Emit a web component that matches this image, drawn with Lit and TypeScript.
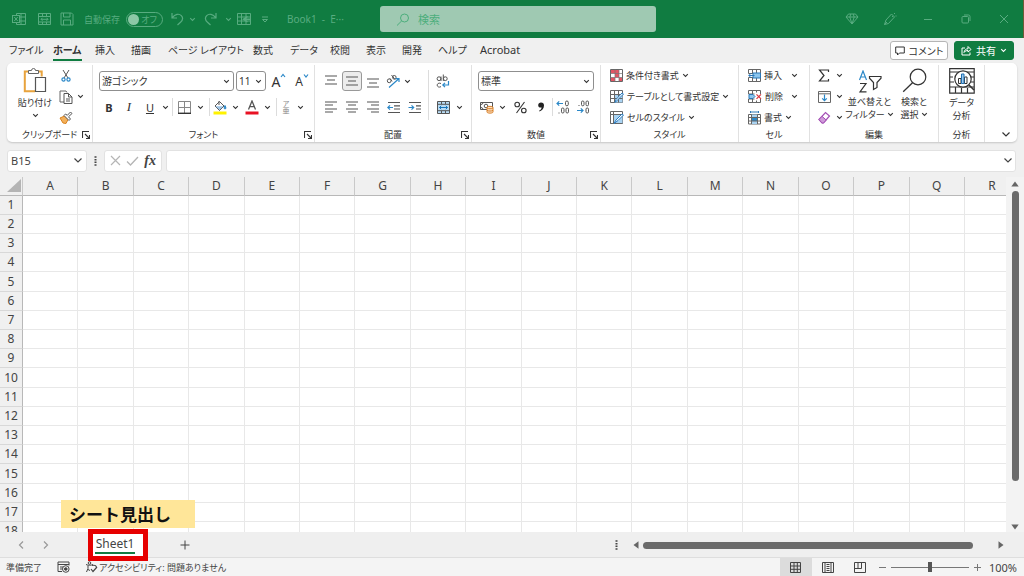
import { LitElement, html, svg, css, nothing } from "lit";
import { customElement } from "lit/decorators.js";

const ic = (w: number, h: number, body: unknown) => html`<svg
  width=${w} height=${h} viewBox="0 0 ${w} ${h}" fill="none" stroke="currentColor" stroke-width="1" aria-hidden="true">${body}</svg>`;

const chev = ic(7, 5, svg`<path d="M1.2 1.2 3.5 3.4 5.8 1.2" stroke-width="1.1"/>`);
const chevBig = ic(10, 7, svg`<path d="M1.5 1.5 5 5 8.5 1.5" stroke-width="1.2"/>`);
const launcher = ic(8, 8, svg`<path d="M.5 7V.5H7M3 3l4 4M7.5 4v3.500H4" stroke-width="1.1"/>`);
const lines = (rows: number[][]) => ic(14, 14, svg`<path d=${rows.map(([x, y, w]) => `M${x} ${y}h${w}`).join("")} stroke="#555" stroke-width="1.2"/>`);
const dots = ic(3, 10, svg`<path d="M.5 1h2M.5 3.700h2M.5 6.300h2M.5 9h2" stroke-width="1.4"/>`);

const I = {
  excel: ic(14, 14, svg`<path d="M4.500 3V1.500h9v11h-9V11M4.500 5h9M4.500 9h9M9 1.500v11"/><rect x=".5" y="3.500" width="7" height="7" fill="#107c41"/><path d="m2.300 5 3.400 4M5.700 5 2.300 9"/>`),
  board: ic(13, 14, svg`<path d="M.5 1.500h12v11H.5zM.5 4.500h12M4.500 1.500v3M8.500 1.500v3M.5 10h12M4.500 10v2.500M8.500 10v2.500M3 7.300h7M4.500 5.800 3 7.300l1.500 1.500M8.500 5.800 10 7.300 8.500 8.800"/>`),
  save: ic(14, 14, svg`<path d="M1 1h10.500L13 2.500V13H1zM3.500 1v4h6.500V1M3.500 13V8h7v5"/>`),
  undo: ic(15, 14, svg`<path d="M2 1v5h5M2.300 5.700C5 2 9 1.300 11.300 3.600c2.400 2.600 1 5-.8 6.700L7.500 13" stroke-width="1.2"/>`),
  redo: ic(15, 14, svg`<path d="M13 1v5H8M12.700 5.700C10 2 6 1.300 3.700 3.600c-2.400 2.600-1 5 .8 6.700L7.500 13" stroke-width="1.2"/>`),
  gridArrow: ic(14, 13, svg`<path d="M.5.5h13v11H.5zM.5 4h13M.5 8h13M4.500.5v11M9 .5v11"/><path d="M10.500 3.500 6.500 6.300l4 2.700M7 6.300h6" stroke-width="1.5"/>`),
  qat: ic(8, 7, svg`<path d="M1 1h6M1.500 3.500h5L4 6z"/>`),
  search: ic(14, 13, svg`<circle cx="8.500" cy="5" r="4"/><path d="M5.700 7.900 1 12.500"/>`),
  diamond: ic(14, 12, svg`<path d="M3.500 1h7L13 4 7 11 1 4zM1 4h12M4.800 4 7 11l2.200-7M4.800 4 5.800 1M9.200 4 8.200 1"/>`),
  pen: ic(14, 14, svg`<path d="M1.500 12.500 3 8l5.500-6 3 3-6 6.500zM1.500 12.500 4 10M9 4l1 1M11 2l1-1M12.500 4h1"/>`),
  min: ic(10, 10, svg`<path d="M1 5.500h8"/>`),
  restore: ic(10, 10, svg`<rect x="1" y="2.500" width="6.500" height="6.500" rx="1"/><path d="M3 1h4.500Q9 1 9 2.500V7"/>`),
  close: ic(10, 10, svg`<path d="m1 1 8 8M9 1 1 9"/>`),
  comment: ic(10, 10, svg`<path d="M.7 1h8.600v6H4.500L2.500 9V7H.7z"/>`),
  share: ic(11, 11, svg`<path d="M4 3H1v7h8V7.500M3 7.500C3.300 5 5 3.800 7 3.800V1.500L10 4.500 7 7V5.500C5.500 5.500 4 6 3 7.500z"/>`),
  paste: ic(24, 26, svg`<path d="M5.500 3.500H1.800v19.700H12M15 3.500h3.700v5" stroke="#e8a33d" stroke-width="2"/><path d="M5.500 5.500v-3h3a2 2 0 0 1 4 0h3v3z" fill="#fff" stroke="#666"/><path d="M12.500 9.500h10v14h-10z" fill="#fff" stroke="#555" stroke-width="1.200"/>`),
  cut: ic(10, 13, svg`<path d="m2 1 5 8M8 1 3 9" stroke="#555"/><circle cx="2.500" cy="10.500" r="1.600" stroke="#2b88c8" stroke-width="1.200"/><circle cx="7.500" cy="10.500" r="1.600" stroke="#2b88c8" stroke-width="1.200"/>`),
  copy: ic(14, 14, svg`<path d="M5 12H1V1h6l1 1.500" stroke="#666"/><path d="M5 3.500h4.500L13 7v6.500H5zM9.500 3.500V7H13M7 9h4M7 11h4" stroke="#555"/>`),
  brush: ic(14, 13, svg`<path d="m1 7 4.500-2L9 8.500 7 12.500 4 12z" fill="#f3b05a" stroke="#d98320"/><path d="m5 4.500 5 5 1.500-1.500-2-2.200L13 2.500 11.500 1 8.300 4.300 6.500 3z" fill="#fff" stroke="#555"/>`),
  borders: ic(13, 13, svg`<path d="M.5 12V.5h12V12M6.500 1v11M1 6.500h11" stroke="#888"/><path d="M0 12.300h13" stroke="#333" stroke-width="1.400"/>`),
  fill: ic(14, 15, svg`<path d="m2 6 4.500-4.500L11 6l-4.500 4.500z" stroke="#555" fill="#fff"/><path d="M2.500 6.200h8L6.500 10z" fill="#9cc3e6" stroke="none"/><path d="M6 1v4" stroke="#555"/><path d="M12 5.500c1.500 2.500.8 3.500 0 3.500s-1.300-1 0-3.500z" fill="#2b88c8" stroke="#2b88c8"/><path d="M.5 13h13" stroke="#fff200" stroke-width="3"/>`),
  color: ic(14, 15, svg`<path d="m3.500 9.500 3.500-8.500 3.500 8.500M4.700 6.700h4.600" stroke="#555" stroke-width="1.300"/><path d="M.5 13h13" stroke="#e81123" stroke-width="3"/>`),
  orient: ic(15, 15, svg`<circle cx="3.200" cy="6.800" r="1.900" stroke="#555"/><path d="m3.800 4.300 2.400 3M5.500 1l3.600 4.600" stroke="#555"/><circle cx="8.300" cy="3.300" r="1.800" stroke="#555"/><path d="M3 13.500 12.500 5M9.500 4.700h3.500V8" stroke="#2b88c8" stroke-width="1.200"/>`),
  indentL: ic(14, 13, svg`<path d="M1 1.500h12M7 4.800h6M7 8h6M1 11.500h12" stroke="#555" stroke-width="1.200"/><path d="M6 6.500H.8M3 4.300.8 6.500 3 8.700" stroke="#2b88c8" stroke-width="1.200"/>`),
  indentR: ic(14, 13, svg`<path d="M1 1.500h12M8 4.800h5M8 8h5M1 11.500h12" stroke="#555" stroke-width="1.200"/><path d="M.5 6.500h5.200M3.500 4.300l2.200 2.200-2.200 2.200" stroke="#2b88c8" stroke-width="1.200"/>`),
  wrap: ic(14, 14, svg`<circle cx="3" cy="4.700" r="1.900" stroke="#555"/><path d="M5 2.500V7M7.300.5V7" stroke="#555"/><circle cx="9.300" cy="4.700" r="1.900" stroke="#555"/><path d="M5 9.500c-2.500-1-3.800.3-3.800 1.700s1.500 2.500 3.800 1.500" stroke="#555"/><path d="M12.500 7v4H7M9 8.800 6.800 11 9 13.200" stroke="#2b88c8" stroke-width="1.200"/>`),
  merge: ic(13, 13, svg`<path d="M.5.5h12v12H.5z" fill="#b9dcf5" stroke="#555"/><path d="M4.500.5V3M8.500.5V3M4.500 10v2.500M8.500 10v2.500M.5 3.300h12M.5 9.700h12" stroke="#555"/><path d="M2.500 6.500h8M4.200 4.800 2.500 6.500l1.700 1.700M8.800 4.800l1.700 1.700-1.700 1.700" stroke="#1673b8"/>`),
  currency: ic(14, 13, svg`<path d="M.5 1.500h12v7H.5zM3 1.500a2 2 0 0 1-2 2M3 8.500a2 2 0 0 0-2-2" stroke="#555"/><circle cx="6" cy="5" r="1.800" stroke="#555"/><path d="M7 6.500c0-1.500 6-1.500 6 0v4.500c0 1.500-6 1.500-6 0z" fill="#fbe0c4" stroke="#d9822b"/><path d="M7 7c1 1 5 1 6 0M7 9.300c1 1 5 1 6 0" stroke="#d9822b"/>`),
  percent: ic(13, 13, svg`<circle cx="3.200" cy="3.500" r="2.300" stroke-width="1.100"/><circle cx="9.800" cy="9.500" r="2.300" stroke-width="1.100"/><path d="M10.500 1 2.500 12" stroke-width="1.100"/>`),
  comma: ic(8, 10, svg`<path d="M4 .5c2 0 3 1.200 3 3 0 3-1.800 5-4.500 6l-.4-.8C3.500 8 4.500 7 4.600 5.500 2.500 6 1.200 4.800 1.200 3.200 1.200 1.500 2.500.5 4 .5z" fill="#222" stroke="none"/>`),
  decInc: ic(14, 14, svg`<path d="M7 3.500H1M3.200 1.300 1 3.500l2.200 2.200" stroke="#2b88c8" stroke-width="1.200"/><rect x="9.500" y="1" width="2.800" height="4.800" rx="1.400" stroke="#555"/><rect x="5.500" y="8" width="2.500" height="5" rx="1.200" stroke="#555"/><rect x="10" y="8" width="2.500" height="5" rx="1.200" stroke="#555"/><path d="M2.500 13h1" stroke="#555"/>`),
  decDec: ic(14, 14, svg`<path d="M1 10.500h6M4.800 8.300 7 10.500l-2.200 2.200" stroke="#2b88c8" stroke-width="1.200"/><rect x="5.500" y="1" width="2.500" height="4.800" rx="1.200" stroke="#555"/><rect x="10" y="1" width="2.500" height="4.800" rx="1.200" stroke="#555"/><rect x="10" y="8" width="2.500" height="5" rx="1.200" stroke="#555"/><path d="M2.500 5.500h1" stroke="#555"/>`),
  cond: ic(13, 13, svg`<path d="M.5.5h12v12H.5z" fill="#fff" stroke="#666"/><path d="M1 1h8v3.500H1zM1 8.500h4V12H1zM5 4.500h4v4H5zM9 8.500h3V12H9z" fill="#e25563" stroke="none"/><path d="M.5 4.500h12M.5 8.500h12M5 .5v12M9 .5v12" stroke="#777" stroke-width=".7"/>`),
  tableFmt: ic(14, 13, svg`<path d="M.5.5h12v12H.5z" fill="#fff" stroke="#666"/><path d="M4.500 4.500h8v8h-8z" fill="#a9d3f2" stroke="none"/><path d="M.5 4.500h12M.5 8.500h12M4.500.5v12M8.500 .5v12" stroke="#666"/><path d="M13.500 4 8 9.500 5 12.500 6 9.500 12 3z" fill="#fff" stroke="#2b7cc0"/>`),
  cellStyle: ic(14, 13, svg`<path d="M.5.5h12v12H.5z" fill="#fff" stroke="#666"/><path d="M3 3.500h9.500v9H3z" fill="#a9d3f2" stroke="none"/><path d="M.5 3.500h12M3.500.5v12M.5 12.500h12" stroke="#666"/><path d="M13.500 4 8 9.500 4 12.500 6 9 12 3z" fill="#fff" stroke="#2b7cc0"/>`),
  ins: ic(13, 13, svg`<path d="M.5.500h12v4H.5zM.5 8.500h12v4H.5zM4.500.5v4M8.500.5v4M4.500 8.500v4M8.500 8.500v4" stroke="#666"/><path d="M5 4h7.500v5H5z" fill="#8cc6ee" stroke="#2b78b8"/><path d="M6.500 6.500H.8M3 4.300.8 6.500 3 8.700" stroke="#2b78b8"/>`),
  del: ic(14, 13, svg`<path d="M.5.500h12v3.500M.5.500v3.500h6M.5 12.500h12V9M.5 12.500V9h6M4.500.5v3.500M8.500.5v2M4.500 9v3.500M8.500 10.500v2" stroke="#666"/><path d="M1 4.500h4L7 6.500 5 8.500H1z" fill="#8cc6ee" stroke="#2b78b8"/><path d="m8.500 4.300 4.500 4.500M13 4.300 8.500 8.800" stroke="#d9363e" stroke-width="1.200"/>`),
  fmt: ic(13, 14, svg`<path d="M2.500 1h8M2.500 0v2M10.500 0v2" stroke="#2b78b8"/><path d="M.5 3.500h12v9.500H.5z" fill="#fff" stroke="#666"/><path d="M3.500 3.500h6v9.500h-6z" fill="#a9d3f2" stroke="none"/><path d="M3.500 6.500h6v3.500h-6z" fill="#2b88c8" stroke="none"/><path d="M.5 6.500h12M.5 10h12M3.500 3.500V13M9.500 3.500V13" stroke="#666"/>`),
  sigma: ic(12, 13, svg`<path d="M10.500 3V1H1.500l4.500 5.500L1.500 12h9v-2" stroke-width="1.200"/>`),
  fillDown: ic(13, 12, svg`<path d="M.5.5h12v11H.5zM.5 2.800h12" stroke="#666"/><path d="M6.500 3.500v6M4.200 7.300l2.300 2.300 2.300-2.300" stroke="#2b88c8" stroke-width="1.200"/>`),
  eraser: ic(13, 13, svg`<path d="m1 8.500 6.500-7L11.500 5 5.500 12h-1.500z" fill="#fff" stroke="#a44fb5" stroke-width="1.200"/><path d="m1 8.500 3-3.200L8.200 9 5.500 12h-1.500z" fill="#cf9bd9" stroke="#a44fb5"/>`),
  sort: ic(24, 23, svg`<path d="m1.500 10 3.500-9 3.500 9M2.700 7h4.600" stroke="#2b88c8" stroke-width="1.200"/><path d="M2 13.500h6L2 21.800h6.500" stroke-width="1.200"/><path d="M11.500 6.500h11.500v1.700L19 12.500v5l-3.500 2v-7l-4-4.300z" stroke-width="1.200"/>`),
  find: ic(25, 25, svg`<circle cx="16" cy="9" r="7.800" stroke-width="1.200"/><path d="m10.500 14.800-9.300 9" stroke-width="1.300"/>`),
  analyze: ic(26, 26, svg`<path d="M.7.700h24.500v24.500H.7zM.7 4h24.500M1 19h24M1 14h4M6.500 19v6M12.500 20v5M18.500 20v5M1 9h3M22 9h3M22 14h3" stroke-width="1.200"/><circle cx="14" cy="11" r="8.200" fill="#fff" stroke-width="1.200"/><path d="m20 17 5 5" stroke-width="1.600"/><path d="M9.500 10.500h2.500v5H9.500zM15.500 9h2.500v6.500h-2.500z" fill="#fff"/><path d="M12.500 6h2.500v9.500h-2.500z" fill="#9cc9ee" stroke="#1f6fb2"/>`),
  x: ic(11, 11, svg`<path d="m1 1 9 9M10 1 1 10" stroke="#b5b5b5" stroke-width="1.200"/>`),
  check: ic(13, 10, svg`<path d="m1 5.500 3.500 3.500L12 1" stroke="#b5b5b5" stroke-width="1.300"/>`),
  prev: ic(6, 10, svg`<path d="M5 1.500 1.500 5 5 8.500" stroke="#999" stroke-width="1.200"/>`),
  next: ic(6, 10, svg`<path d="M1 1.500 4.500 5 1 8.500" stroke="#999" stroke-width="1.200"/>`),
  plus: ic(10, 10, svg`<path d="M5 .5v9M.5 5h9"/>`),
  macro: ic(13, 12, svg`<path d="M5 10.500H1V1h11v3.500M1 3.500h11M3 6h3M3 8h2"/><circle cx="8.800" cy="8" r="3.300"/><circle cx="8.800" cy="8" r="1.300" fill="currentColor"/>`),
  access: ic(13, 12, svg`<circle cx="4.500" cy="2" r="1.300"/><path d="M1 3.500c2 1 5 1 7 0M3 4.500v3L1.500 11M3.500 8l1 2"/><path d="m6 8 2 2.500L12 6M7 4.500c2-.5 4 0 4.500 1.500" stroke-width="1.200"/>`),
  vNormal: ic(11, 11, svg`<path d="M.5.5h10v10H.5zM.5 4h10M.5 7.300h10M4 .5v10M7.300.5v10"/>`),
  vPage: ic(12, 11, svg`<path d="M.5.5h11v10H.5zM3 .5v10M9 .5v10M4.500 2.500h3M4.500 4.500h3M4.500 6.500h3M4.500 8.500h3"/>`),
  vBreak: ic(12, 11, svg`<path d="M.5.5h11v10H.5zM.5 6.500h7M7.500.5v6M4 .5v6"/>`),
  up: ic(8, 6, svg`<path d="M4 .5 7.700 5.500H.3z" fill="#666" stroke="none"/>`),
  down: ic(8, 6, svg`<path d="M4 5.500 7.700.5H.3z" fill="#666" stroke="none"/>`),
  left: ic(6, 8, svg`<path d="M.5 4 5.500.3v7.400z" fill="#666" stroke="none"/>`),
  right: ic(6, 8, svg`<path d="M5.500 4 .5.3v7.400z" fill="#666" stroke="none"/>`),
};

const reset = css`
  :host, * { box-sizing: border-box; }
  svg { display: block; flex: none; }
  button, input, select {
    appearance: none; margin: 0; padding: 0; border: 0; background: none;
    font: inherit; color: inherit; font-feature-settings: inherit; outline: none; border-radius: 0; min-width: 0;
  }
  button { display: flex; align-items: center; justify-content: center; white-space: nowrap; }
`;

@customElement("title-bar")
class TitleBar extends LitElement {
  static styles = [reset, css`
    :host { display: grid; grid-template-columns: 380px minmax(0, 276px) 1fr; align-items: center; height: 38px;
      background: #107c41; color: #58ac80; border-right: 1px solid #6f5a35; font-size: 9px; }
    .left { display: grid; grid-template-columns: 26px 24px 22px 48px 40px 22px 8px 28px 8px 24px 18px 1fr; padding-left: 6px; align-items: center; }
    .auto { padding-left: 6px; }
    .switch { display: flex; align-items: center; justify-content: space-between; height: 15px; width: 37px; border: 1px solid; border-radius: 8px; padding: 0 5px 0 1px; }
    .knob { width: 11px; height: 11px; border-radius: 50%; background: #8cc8a6; }
    .book { font-size: 10px; padding-left: 13px; white-space: nowrap; }
    .search { display: flex; align-items: center; gap: 8px; height: 26px; padding-left: 16px; border-radius: 3px; background: #9fc9b2; color: #4cae7c; font-size: 11px; }
    .search input { flex: 1; }
    .search input::placeholder { color: inherit; opacity: 1; }
    .right { display: flex; justify-content: flex-end; }
    .right button { width: 38px; height: 24px; }
  `];
  render() {
    return html`
      <div class="left">
        <button aria-label="Excel">${I.excel}</button>
        <button aria-label="表示">${I.board}</button>
        <button aria-label="保存">${I.save}</button>
        <span class="auto">自動保存</span>
        <button class="switch" role="switch" aria-checked="false" aria-label="自動保存"><span class="knob"></span>オフ</button>
        <button aria-label="元に戻す">${I.undo}</button><button aria-label="元に戻す一覧">${chev}</button>
        <button aria-label="やり直し">${I.redo}</button><button aria-label="やり直し一覧">${chev}</button>
        <button aria-label="シート">${I.gridArrow}</button>
        <button aria-label="カスタマイズ">${I.qat}</button>
        <span class="book">Book1 &nbsp;-&nbsp; E···</span>
      </div>
      <label class="search">${I.search}<input type="text" placeholder="検索" aria-label="検索" /></label>
      <div class="right">
        <button aria-label="Premium">${I.diamond}</button>
        <button aria-label="ペン">${I.pen}</button>
        <button aria-label="最小化">${I.min}</button>
        <button aria-label="元のサイズ">${I.restore}</button>
        <button aria-label="閉じる">${I.close}</button>
      </div>`;
  }
}

const TABS = ["ファイル", "ホーム", "挿入", "描画", "ページ レイアウト", "数式", "データ", "校閲", "表示", "開発", "ヘルプ", "Acrobat"];

@customElement("tab-row")
class TabRow extends LitElement {
  static styles = [reset, css`
    :host { display: flex; justify-content: space-between; align-items: center; height: 25px; padding: 0 10px 0 9px; font-size: 10px; color: #333; }
    .tabs { display: grid; grid-template-columns: 44px 42px 36px 37px 85px 37px 40px 36px 36px 36px 42px 50px; }
    .tab { justify-content: flex-start; height: 22px; }
    .tab:last-child { font-size: 11px; }
    .tab span { line-height: 18px; border-bottom: 2px solid transparent; }
    .on span { font-weight: 700; border-color: #107c41; }
    .actions { display: flex; gap: 6px; }
    .actions button { height: 19px; gap: 4px; border-radius: 3px; border: 1px solid #b5b5b5; background: #fff; width: 58px; }
    .actions .share { background: #107c41; border-color: #107c41; color: #fff; width: 60px; }
  `];
  render() {
    return html`
      <div class="tabs" role="tablist">
        ${TABS.map((t) => html`<button role="tab" class="tab ${t === "ホーム" ? "on" : ""}"><span>${t}</span></button>`)}
      </div>
      <div class="actions">
        <button>${I.comment}コメント</button>
        <button class="share">${I.share}共有 ${chev}</button>
      </div>`;
  }
}

@customElement("ribbon-bar")
class RibbonBar extends LitElement {
  static styles = [reset, css`
    :host { display: grid; grid-template-columns: 86px 222px 157px 129px 138px 71px 129px 46px 1fr; height: 79px; margin: 0 7px;
      background: #fff; border-radius: 5px; box-shadow: 0 1px 2px #0000002e; padding: 2px 0; font-size: 9px; color: #333; }
    .group { display: grid; grid-template-columns: minmax(0, 1fr); grid-template-rows: minmax(0, 1fr) 14px; border-right: 1px solid #e1e1e1; min-width: 0; }
    .foot { display: grid; grid-template-columns: 12px 1fr 12px; align-items: center; text-align: center; line-height: 14px; white-space: nowrap; }
    .foot span { grid-column: 2; }
    .two { display: grid; grid-template-rows: 20px 20px; gap: 6px; padding: 6px 6px 0; align-content: start; }
    .row { display: grid; align-items: center; }
    .row > *, .stack > * { justify-self: center; }
    .sep { width: 1px; height: 18px; background: #dcdcdc; }
    .tall { width: 1px; height: 50px; background: #dcdcdc; margin: 5px 0 0 3px; }
    .stack { display: grid; grid-template-rows: repeat(3, 21px); align-items: center; }
    .stack.list > button { justify-self: start; gap: 3px; }
    .combo { display: grid; grid-template-columns: 1fr 10px; align-items: center; height: 20px; border: 1px solid #8f8f8f; border-radius: 3px; justify-self: stretch; font-size: 10px; }
    .combo select { grid-area: 1 / 1 / 2 / 3; height: 18px; padding-left: 2px; }
    .combo svg { grid-area: 1 / 2; pointer-events: none; }
    .font { grid-template-columns: 135px 30px 22px 20px; column-gap: 2px; }
    .fmt { grid-template-columns: 20px 20px 22px 9px 5px 18px 14px 4px 18px 12px 21px 10px 8px 12px 17px; }
    .b { font-weight: 700; font-size: 11px; }
    .i { font-style: italic; font-family: "Liberation Serif", serif; font-size: 13px; }
    .u { text-decoration: underline; font-size: 11px; }
    .ab { font-size: 14px; align-items: flex-start; line-height: 17px; }
    .ab.small { font-size: 12px; }
    .ab svg { color: #2b88c8; }
    .ruby { flex-direction: column; font-size: 7px; line-height: 7px; color: #888; }
    .align { display: grid; grid-template-columns: 105px 6px 1fr; padding-left: 5px; }
    .align .two { padding: 6px 0 0; }
    .five { grid-template-columns: repeat(5, 21px); }
    .row > .near { justify-self: start; }
    .mid { width: 20px; height: 20px; border: 1px solid #999; border-radius: 3px; background: #ececec; }
    .pair { grid-template-columns: 24px 8px; }
    .num { grid-template-columns: 18px 12px 24px 18px 4px 18px 22px; }
    .clip { display: grid; grid-template-columns: 46px 16px 12px; padding-left: 5px; }
    .big { flex-direction: column; justify-content: flex-start; line-height: 13px; padding-top: 3px; }
    .big > svg:first-child { margin-bottom: 2px; }
    .big > svg:last-child { margin-top: 4px; }
    .sort { padding-top: 5px; }
    .line { display: flex; align-items: center; gap: 2px; }
    .edit { display: grid; grid-template-columns: 22px 8px 53px 36px; padding-left: 3px; }
    .cells { grid-template-columns: 43px 9px; padding-left: 9px; }
    .cells .wide { grid-column: 1 / 3; }
    .styles { padding-left: 9px; }
    .end { display: flex; align-items: flex-end; justify-content: flex-end; padding: 0 6px 4px; }
  `];
  group(label: string, body: unknown, launch = false) {
    return html`<section class="group" aria-label=${label}>${body}
      <div class="foot"><span>${label}</span>${launch ? html`<button aria-label="${label}の設定">${launcher}</button>` : nothing}</div></section>`;
  }
  b(icon: unknown, label: string, cls = "") {
    return html`<button class=${cls} aria-label=${label}>${icon}</button>`;
  }
  render() {
    const c = this.b(chev, "オプション");
    const sep = html`<span class="sep"></span>`;
    const caret = (up: boolean) => ic(6, 5, svg`<path d=${up ? "M1 4l2-2.500L5 4" : "M1 1.500 3 4l2-2.500"} stroke-width="1.200"/>`);
    return html`
      ${this.group("クリップボード", html`<div class="clip">
        <button class="big">${I.paste}<span>貼り付け</span>${chev}</button>
        <div class="stack">${this.b(I.cut, "切り取り")}${this.b(I.copy, "コピー")}${this.b(I.brush, "書式のコピー")}</div>
        <div class="stack"><span></span>${c}</div>
      </div>`, true)}
      ${this.group("フォント", html`<div class="two">
        <div class="row font">
          <label class="combo"><select aria-label="フォント名"><option>游ゴシック</option></select>${chev}</label>
          <label class="combo"><select aria-label="フォント サイズ"><option>11</option></select>${chev}</label>
          <button class="ab" aria-label="フォント サイズの拡大">A${caret(true)}</button>
          <button class="ab small" aria-label="フォント サイズの縮小">A${caret(false)}</button>
        </div>
        <div class="row fmt">
          ${this.b("B", "太字", "b")}${this.b("I", "斜体", "i")}${this.b("U", "下線", "u")}${c}${sep}
          ${this.b(I.borders, "罫線")}${c}${sep}${this.b(I.fill, "塗りつぶしの色")}${c}${this.b(I.color, "フォントの色")}${c}${sep}
          <button class="ruby" aria-label="ふりがな"><span>ア</span><span>亜</span></button>${c}
        </div></div>`, true)}
      ${this.group("配置", html`<div class="align">
        <div class="two">
          <div class="row five">
            ${this.b(lines([[1, 2, 12], [3, 6, 8], [1, 10, 12]]), "上揃え")}
            ${this.b(lines([[1, 3, 12], [3, 7, 8], [1, 11, 12]]), "上下中央揃え", "mid")}
            ${this.b(lines([[1, 5, 12], [3, 9, 8], [1, 13, 12]]), "下揃え")}
            ${this.b(I.orient, "方向")}${this.b(chev, "方向の一覧", "near")}
          </div>
          <div class="row five">
            ${this.b(lines([[1, 2, 12], [1, 5, 8], [1, 9, 12], [1, 12, 8]]), "左揃え")}
            ${this.b(lines([[1, 2, 12], [3, 5, 8], [1, 9, 12], [3, 12, 8]]), "中央揃え")}
            ${this.b(lines([[1, 2, 12], [5, 5, 8], [1, 9, 12], [5, 12, 8]]), "右揃え")}
            ${this.b(I.indentL, "インデントを減らす")}${this.b(I.indentR, "インデントを増やす")}
          </div>
        </div>
        <span class="tall"></span>
        <div class="two">
          <div class="row pair">${this.b(I.wrap, "折り返して全体を表示する")}</div>
          <div class="row pair">${this.b(I.merge, "セルを結合して中央揃え")}${c}</div>
        </div></div>`, true)}
      ${this.group("数値", html`<div class="two">
        <label class="combo"><select aria-label="表示形式"><option>標準</option></select>${chev}</label>
        <div class="row num">${this.b(I.currency, "通貨表示形式")}${c}${this.b(I.percent, "パーセント スタイル")}${this.b(I.comma, "桁区切りスタイル")}${sep}
          ${this.b(I.decInc, "小数点以下の表示桁数を増やす")}${this.b(I.decDec, "小数点以下の表示桁数を減らす")}</div></div>`, true)}
      ${this.group("スタイル", html`<div class="stack list styles">
        <button>${I.cond}条件付き書式${chev}</button>
        <button>${I.tableFmt}テーブルとして書式設定${chev}</button>
        <button>${I.cellStyle}セルのスタイル${chev}</button></div>`)}
      ${this.group("セル", html`<div class="stack list cells">
        <button>${I.ins}挿入</button>${this.b(chev, "挿入の一覧")}
        <button>${I.del}削除</button>${this.b(chev, "削除の一覧")}
        <button class="wide">${I.fmt}書式 ${chev}</button></div>`)}
      ${this.group("編集", html`<div class="edit">
        <div class="stack">${this.b(I.sigma, "オート SUM")}${this.b(I.fillDown, "フィル")}${this.b(I.eraser, "クリア")}</div>
        <div class="stack">${c}${c}${c}</div>
        <button class="big sort">${I.sort}<span>並べ替えと</span><span class="line">フィルター${chev}</span></button>
        <button class="big">${I.find}<span>検索と</span><span class="line">選択${chev}</span></button></div>`)}
      ${this.group("分析", html`<button class="big">${I.analyze}<span>データ</span><span>分析</span></button>`)}
      <div class="end"><button aria-label="リボンの表示オプション">${chevBig}</button></div>`;
  }
}

@customElement("formula-bar")
class FormulaBar extends LitElement {
  static styles = [reset, css`
    :host { display: grid; grid-template-columns: 80px 17px 58px 1fr; padding: 7px 8px 5px 7px; height: 35px; align-items: center; color: #444; }
    .box { display: flex; align-items: center; height: 22px; background: #fff; border: 1px solid #e2e2e2; border-radius: 3px; }
    .name { padding: 0 3px; font-size: 11px; }
    .box input { flex: 1; width: 20px; }
    .dots { justify-self: center; }
    .fx { justify-content: space-evenly; }
    .f { font: italic 700 14px "Liberation Serif", serif; }
    .formula { margin-left: 4px; padding: 0 2px; }
  `];
  render() {
    return html`
      <div class="box name"><input type="text" aria-label="名前ボックス" .value=${"B15"} /><button aria-label="名前の一覧">${chevBig}</button></div>
      <span class="dots">${dots}</span>
      <div class="box fx"><button aria-label="キャンセル">${I.x}</button><button aria-label="入力">${I.check}</button><button class="f" aria-label="関数の挿入">fx</button></div>
      <div class="box formula"><input type="text" aria-label="数式バー" /><button aria-label="数式バーの展開">${chevBig}</button></div>`;
  }
}

const COLS = [..."ABCDEFGHIJKLMNOPQR"];
const ROWS = Array.from({ length: 18 }, (_, i) => i + 1);

@customElement("sheet-grid")
class SheetGrid extends LitElement {
  static styles = [reset, css`
    :host { display: grid; grid-template-columns: 1fr 18px; min-height: 0; overflow: hidden; }
    .view { overflow: hidden; background: #fff; }
    table { width: 100%; table-layout: fixed; border-collapse: separate; border-spacing: 0; font-size: 12px; color: #444; }
    .side { width: 23px; }
    .last { width: 41px; }
    tr { height: 19px; }
    tbody tr:nth-child(5n) { height: 20px; }
    th, td { padding: 0; font-weight: 400; line-height: 16px; border-right: 1px solid #e8e8e8; border-bottom: 1px solid #e8e8e8; }
    th { background: #f0f0f0; border-color: #c9c9c9; }
    thead th { border-bottom-color: #b8b8b8; }
    tbody th { border-right-color: #b8b8b8; border-bottom-color: #d8d8d8; }
    thead th:last-child { padding-left: 13px; }
    th:last-child, td:last-child { border-right: 0; }
    tbody th:first-child { border-right: 1px solid #b8b8b8; }
    .corner svg { margin: 0 0 0 auto; }
    .scroll { display: flex; flex-direction: column; align-items: center; gap: 4px; padding: 4px 0 2px; background: #f3f3f3; }
    .track { flex: 1; display: flex; }
    .thumb { width: 7px; height: 88%; border-radius: 4px; background: #6b6b6b; }
  `];
  render() {
    return html`
      <div class="view"><table aria-label="Sheet1">
        <colgroup><col class="side" />${COLS.map((c) => html`<col class=${c === "R" ? "last" : ""} />`)}</colgroup>
        <thead><tr><th class="corner">${ic(15, 14, svg`<path d="M14 0v13H0z" fill="#b4b4b4" stroke="none"/>`)}</th>${COLS.map((c) => html`<th scope="col">${c}</th>`)}</tr></thead>
        <tbody>${ROWS.map((r) => html`<tr><th scope="row">${r}</th>${COLS.map(() => html`<td></td>`)}</tr>`)}</tbody>
      </table></div>
      <div class="scroll">${I.up}<div class="track"><div class="thumb"></div></div>${I.down}</div>`;
  }
}

@customElement("sheet-tabs")
class SheetTabs extends LitElement {
  static styles = [reset, css`
    :host { display: grid; grid-template-columns: 612px 1fr; align-items: center; height: 26px; background: #efefef; border-bottom: 1px solid #dedede; color: #444; }
    .tabs { display: grid; grid-template-columns: 26px 24px 30px 60px 14px 46px; padding-left: 8px; align-items: center; }
    .tab { grid-column: 4; position: relative; height: 26px; background: #fff; font-size: 12px; }
    .tab button { width: 54px; height: 24px; }
    .tab button span { line-height: 17px; border-bottom: 2px solid #107c41; padding: 0 1px; }
    .frame { position: absolute; inset: -3px 0; border: 5px solid #e60000; pointer-events: none; }
    .note { position: absolute; left: -27px; bottom: 30px; width: 134px; height: 28px; padding-left: 8px; background: #ffe699; color: #111;
      font: 700 17px/28px "Noto Sans CJK JP", sans-serif; font-feature-settings: normal; white-space: nowrap; }
    .add { grid-column: 6; }
    .scroll { display: grid; grid-template-columns: 21px 10px 1fr 6px; align-items: center; padding-right: 20px; }
    .scroll > svg:first-child { margin-left: 3px; }
    .thumb { height: 7px; width: 93%; border-radius: 4px; background: #6b6b6b; }
  `];
  render() {
    return html`
      <div class="tabs">
        <button aria-label="前のシート">${I.prev}</button><button aria-label="次のシート">${I.next}</button>
        <div class="tab"><button><span>Sheet1</span></button><span class="frame"></span><span class="note">シート見出し</span></div>
        <button class="add" aria-label="新しいシート">${I.plus}</button>
      </div>
      <div class="scroll">${dots}${I.left}<div class="thumb"></div>${I.right}</div>`;
  }
}

@customElement("status-bar")
class StatusBar extends LitElement {
  static styles = [reset, css`
    :host { display: flex; justify-content: space-between; align-items: center; height: 18px; background: #f4f4f4; color: #444; font-size: 9px; padding: 0 7px 0 6px; }
    div { display: flex; align-items: center; white-space: nowrap; }
    .left { gap: 15px; }
    .left button { gap: 1px; }
    .view { width: 32px; height: 18px; }
    .on { background: #dcdcdc; }
    .zoom { gap: 5px; padding-left: 3px; }
    .zoom button { color: #777; }
    .zoom input { width: 78px; height: 12px; background: linear-gradient(#777, #777) center / 100% 1px no-repeat; }
    .zoom input::-webkit-slider-thumb { appearance: none; width: 4px; height: 10px; background: #555; }
    .pct { font-size: 11px; padding-left: 3px; }
  `];
  render() {
    return html`
      <div class="left"><span>準備完了</span><button aria-label="マクロの記録">${I.macro}</button><button>${I.access}アクセシビリティ: 問題ありません</button></div>
      <div>
        <button class="view on" aria-label="標準">${I.vNormal}</button>
        <button class="view" aria-label="ページ レイアウト">${I.vPage}</button>
        <button class="view" aria-label="改ページ プレビュー">${I.vBreak}</button>
        <div class="zoom">
          <button aria-label="縮小">${ic(7, 7, svg`<path d="M0 3.500h7"/>`)}</button>
          <input type="range" min="0" max="100" value="50" aria-label="ズーム" />
          <button aria-label="拡大">${ic(7, 7, svg`<path d="M0 3.500h7M3.500 0v7"/>`)}</button>
          <span class="pct">100%</span>
        </div>
      </div>`;
  }
}

@customElement("app-root")
class AppRoot extends LitElement {
  static styles = css`
    :host { display: grid; grid-template-rows: auto auto auto auto minmax(0, 1fr) auto auto; height: 100vh; overflow: hidden; background: #f0f0f0;
      font-family: "Noto Sans", "Noto Sans CJK JP", sans-serif; font-feature-settings: "palt"; }
  `;
  render() {
    return html`<title-bar></title-bar><tab-row></tab-row><ribbon-bar></ribbon-bar><formula-bar></formula-bar>
      <sheet-grid></sheet-grid><sheet-tabs></sheet-tabs><status-bar></status-bar>`;
  }
}
